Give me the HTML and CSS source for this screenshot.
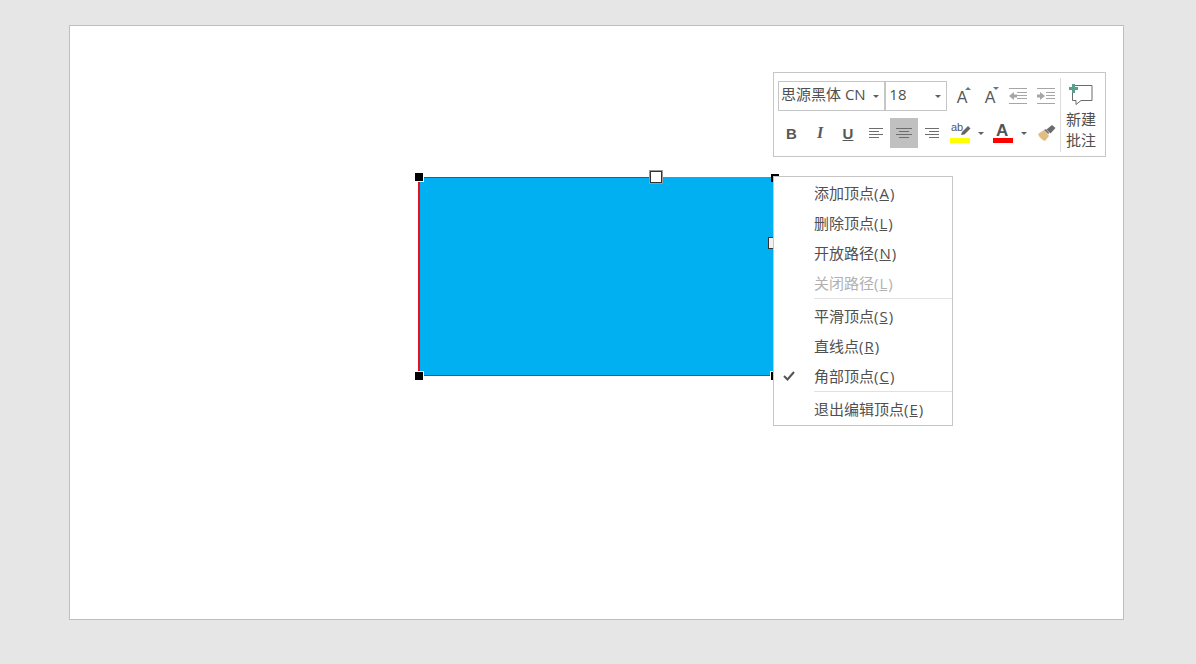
FILE: index.html
```html
<!DOCTYPE html>
<html lang="zh-CN">
<head>
<meta charset="utf-8">
<title>编辑顶点</title>
<link rel="stylesheet" href="styles.css">
</head>
<body>
<main class="slide">
  <div class="shape"></div>
  <div class="edge edge-top-red"></div>
  <div class="edge edge-top-blue"></div>
  <div class="edge edge-bottom"></div>
  <div class="handle h-tl"></div>
  <div class="handle h-bl"></div>
  <div class="handle h-tr"></div>
  <div class="handle h-br"></div>
  <div class="handle-open h-top"></div>
  <div class="handle-open h-right"></div>

  <section class="toolbar">
    <div class="tool-left">
      <div class="tool-row">
        <div class="combo combo-font"><span>思源黑体 CN</span><i class="arrow"></i></div>
        <div class="combo combo-size"><span>18</span><i class="arrow"></i></div>
        <div class="btn btn-first"><span class="grow-a">A</span><i class="caret caret-up"></i></div>
        <div class="btn"><span class="grow-a">A</span><i class="caret caret-down"></i></div>
        <div class="btn">
          <svg width="18" height="16" viewBox="0 0 18 16"><path d="M0 .5h18M8 4.500h10M8 7.500h10M8 10.500h10M0 15.500h18" stroke="#a6a6a6" fill="none"/><path d="M0 8l5-4v2.500h3v3H5V12z" fill="#a6a6a6"/></svg>
        </div>
        <div class="btn">
          <svg width="18" height="16" viewBox="0 0 18 16"><path d="M0 .5h18M9 4.500h9M9 7.500h9M9 10.500h9M0 15.500h18" stroke="#a6a6a6" fill="none"/><path d="M8 8L3 4v2.500H0v3h3V12z" fill="#a6a6a6"/></svg>
        </div>
      </div>
      <div class="tool-row row-two">
        <div class="btn"><span class="fmt fmt-b">B</span></div>
        <div class="btn"><span class="fmt fmt-i">I</span></div>
        <div class="btn"><span class="fmt fmt-u">U</span></div>
        <div class="btn">
          <svg width="14" height="10" viewBox="0 0 14 10"><path d="M0 .5h14M0 3.500h10M0 6.500h14M0 9.500h10" stroke="#6e6e6e" fill="none"/></svg>
        </div>
        <div class="btn btn-active">
          <svg width="16" height="10" viewBox="0 0 16 10"><path d="M0 .5h16M3 3.500h10M0 6.500h16M3 9.500h10" stroke="#6e6e6e" fill="none"/></svg>
        </div>
        <div class="btn">
          <svg width="14" height="10" viewBox="0 0 14 10"><path d="M0 .5h14M4 3.500h10M0 6.500h14M4 9.500h10" stroke="#6e6e6e" fill="none"/></svg>
        </div>
        <div class="btn btn-color">
          <span class="ab">ab</span>
          <svg class="pen" width="11" height="11" viewBox="0 0 11 11"><path d="M1 10l1-3 6-6 2.500 2.500-6 6z" fill="#666"/></svg>
          <i class="bar bar-yellow"></i>
        </div>
        <div class="btn-arrow"><i class="arrow"></i></div>
        <div class="btn btn-color btn-fontcolor">
          <span class="color-a">A</span>
          <i class="bar bar-red"></i>
        </div>
        <div class="btn-arrow"><i class="arrow"></i></div>
        <div class="btn btn-brush">
          <svg width="18" height="16" viewBox="0 0 18 16"><path d="M0 9l6-4 5 6-4 5C4 15 1 12 0 9z" fill="#e3bd80"/><path d="M6 5l2-1 3 3.500-.5 2z" fill="#7a7a7a"/><path d="M8.500 4.500L14 0l3.500 3-5 5.500z" fill="#6b6b6b"/></svg>
        </div>
      </div>
    </div>
    <div class="tool-divider"></div>
    <div class="tool-note">
      <svg class="note-icon" width="24" height="22" viewBox="0 0 24 22">
        <path d="M3.500 4.500V1.500h19.500v15H12l-5 4v-4H3.500V9" fill="#fff" stroke="#6b6b6b"/>
        <path d="M3 0h3v3h3v3H6v3H3V6H0V3h3z" fill="#5a9e8c"/>
      </svg>
      <span>新建</span>
      <span>批注</span>
    </div>
  </section>

  <nav class="menu">
    <div class="item">添加顶点(<u>A</u>)</div>
    <div class="item">删除顶点(<u>L</u>)</div>
    <div class="item">开放路径(<u>N</u>)</div>
    <div class="item item-off">关闭路径(<u>L</u>)</div>
    <div class="sep"></div>
    <div class="item">平滑顶点(<u>S</u>)</div>
    <div class="item">直线点(<u>R</u>)</div>
    <div class="item item-checked">
      <svg class="check" width="12" height="10" viewBox="0 0 12 10"><path d="M1 5l3.500 3.500L11 1" fill="none" stroke="#555" stroke-width="2"/></svg>
      角部顶点(<u>C</u>)
    </div>
    <div class="sep"></div>
    <div class="item">退出编辑顶点(<u>E</u>)</div>
  </nav>
</main>
</body>
</html>
```
FILE: styles.css
```css
* { box-sizing: border-box; }

html, body { margin: 0; height: 100%; }

body {
  height: 664px;
  padding: 25px 0 0 69px;
  overflow: hidden;
  background: #e6e6e6;
  color: #505050;
  font-family: "Open Sans", "Noto Sans CJK SC", sans-serif;
  font-size: 15px;
}

.slide {
  position: relative;
  width: 1055px;
  height: 595px;
  background: #fff;
  border: 1px solid #bfbfbf;
}

/* Shape on the slide canvas */
.shape {
  position: absolute;
  left: 348px;
  top: 151px;
  width: 360px;
  height: 199px;
  background: #00b0f0;
  border-left: 2px solid #e8101c;
}
.edge { position: absolute; height: 1px; }
.edge-top-red { left: 348px; top: 151px; width: 232px; background: #e8101c; }
.edge-top-blue { left: 592px; top: 151px; width: 116px; background: #4d94b8; }
.edge-bottom { left: 348px; top: 349px; width: 360px; height: 1px; background: #e8101c; }

.handle {
  position: absolute;
  width: 8px;
  height: 8px;
  background: #000;
  outline: 1px solid #fff;
}
.h-tl { left: 345px; top: 147px; }
.h-bl { left: 345px; top: 346px; }
.h-tr { left: 701px; top: 148px; outline: none; }
.h-br { left: 701px; top: 346px; }

.handle-open {
  position: absolute;
  width: 12px;
  height: 12px;
  background: #fff;
  border: 1px solid #333;
  outline: 1px solid #9a9a9a;
}
.h-top { left: 580px; top: 145px; }
.h-right { left: 698px; top: 211px; outline: none; background: #f0f0f0; }

/* Floating format toolbar */
.toolbar {
  position: absolute;
  left: 703px;
  top: 46px;
  width: 333px;
  height: 85px;
  display: flex;
  padding: 8px 0 0 4px;
  background: #fff;
  border: 1px solid #c6c6c6;
}
.tool-left { width: 282px; flex: none; }
.tool-row { display: flex; height: 30px; }
.row-two { margin-top: 7px; }

.combo {
  display: flex;
  align-items: center;
  justify-content: space-between;
  height: 30px;
  padding: 0 5px 3px 2px;
  border: 1px solid #c6c6c6;
  color: #505050;
  white-space: nowrap;
  line-height: 1;
}
.combo .arrow { margin-top: 4px; }
.combo-font { width: 108px; }
.combo-size { width: 62px; padding-left: 3px; padding-right: 5px; margin-right: 1px; }

.arrow {
  display: block;
  width: 0;
  height: 0;
  border-left: 3px solid transparent;
  border-right: 3px solid transparent;
  border-top: 3px solid #606060;
  flex: none;
}

.btn {
  position: relative;
  flex: none;
  width: 28px;
  height: 30px;
  display: flex;
  align-items: center;
  justify-content: center;
}
.btn-active { background: #c0c0c0; }

.grow-a {
  font-family: "Liberation Sans", sans-serif;
  font-size: 16px;
  line-height: 1;
  color: #585858;
  margin: 3px 0 0 0;
}
.caret {
  position: absolute;
  right: 5px;
  top: 6px;
  width: 0;
  height: 0;
  border-left: 3px solid transparent;
  border-right: 3px solid transparent;
}
.caret-up { border-bottom: 3px solid #4a7ea8; }
.caret-down { border-top: 3px solid #4a7ea8; }

.fmt {
  font-size: 15px;
  font-weight: 700;
  line-height: 1;
  color: #585858;
}
.fmt-b { font-family: "Liberation Sans", sans-serif; margin-right: 1px; }
.fmt-i { font-family: "Liberation Serif", serif; font-style: italic; font-size: 16px; }
.fmt-u { font-family: "Liberation Sans", sans-serif; text-decoration: underline; }

.btn-color { align-items: flex-start; }
.ab {
  position: absolute;
  left: 5px;
  top: 4px;
  font-family: "Liberation Sans", sans-serif;
  font-size: 11px;
  line-height: 11px;
  color: #555;
}
.pen { position: absolute; left: 14px; top: 7px; }
.bar { position: absolute; left: 4px; top: 20px; width: 20px; height: 5px; }
.bar-yellow { background: #ffff00; }
.bar-red { background: #ff0000; }
.color-a {
  position: absolute;
  left: 7px;
  top: 4px;
  font-family: "Liberation Sans", sans-serif;
  font-size: 17px;
  font-weight: 700;
  line-height: 17px;
  color: #555;
}
.btn-fontcolor { margin-left: 1px; }
.btn-arrow {
  flex: none;
  width: 14px;
  height: 30px;
  padding-top: 14px;
  display: flex;
  justify-content: center;
}
.btn-brush { margin-left: 2px; }

.tool-divider {
  flex: none;
  width: 1px;
  height: 74px;
  margin-top: -3px;
  background: #dcdcdc;
}
.tool-note {
  flex: none;
  width: 40px;
  display: flex;
  flex-direction: column;
  align-items: center;
  line-height: 21px;
  color: #505050;
}
.note-icon { margin: 3px 0 3px 0; flex: none; }

/* Context menu */
.menu {
  position: absolute;
  left: 703px;
  top: 150px;
  width: 180px;
  height: 250px;
  padding-top: 2px;
  background: #fff;
  border: 1px solid #c6c6c6;
}
.item {
  position: relative;
  height: 30px;
  padding-left: 40px;
  line-height: 28px;
  color: #505050;
  white-space: nowrap;
}
.item u { margin: 0 1px; }
.item-off { color: #b1b1b1; }
.check { position: absolute; left: 9px; top: 9px; }
.sep {
  height: 1px;
  margin: -1px 0 3px 40px;
  background: #e1e1e1;
}
```
